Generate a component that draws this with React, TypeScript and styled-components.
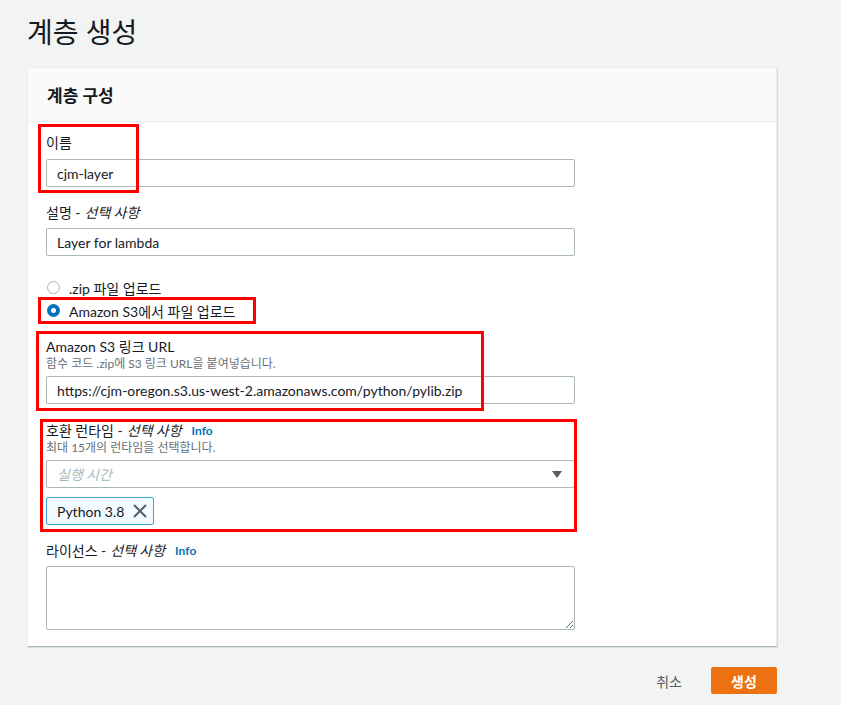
import React from "react";
import styled, { createGlobalStyle } from "styled-components";

const FONT = `Lato, "Noto Sans CJK KR", sans-serif`;

const Global = createGlobalStyle`
  html, body { margin: 0; padding: 0; background: #f2f3f3; }
  body { font-family: ${FONT}; color: #16191f; }
  * { box-sizing: border-box; }
`;

const Page = styled.div`
  position: relative;
  width: 841px;
  min-height: 705px;
  padding: 10px 64px 0 27px;
`;

const Title = styled.h1`
  margin: 0;
  font-size: 28px;
  font-weight: 400;
  line-height: 44px;
  color: #16191f;
`;

const Card = styled.section`
  margin-top: 13px;
  width: 750px;
  background: #fff;
  border: 1px solid #eaeded;
  border-bottom-color: #aab7b8;
  box-shadow: 1px 1px 0 #d5dbdb;
`;

const CardHeader = styled.header`
  height: 54px;
  display: flex;
  align-items: center;
  padding: 0 19px;
  background: #fafafa;
  border-bottom: 1px solid #eaeded;
  font-size: 17px;
  font-weight: 700;
`;

const CardBody = styled.div`
  padding: 12px 201px 16px 18px;
  display: flex;
  flex-direction: column;
`;

const Field = styled.div<{ $mt?: number }>`
  margin-top: ${(p) => p.$mt ?? 0}px;
  display: flex;
  flex-direction: column;
`;

const Label = styled.label`
  font-size: 14px;
  line-height: 18px;
  display: flex;
  align-items: center;
  em { font-style: italic; margin-left: 4px; }
`;

const Info = styled.span`
  margin-left: 10px;
  font-size: 12px;
  font-weight: 700;
  color: #0073bb;
`;

const Desc = styled.div`
  font-size: 12px;
  line-height: 16px;
  color: #687078;
`;

const Input = styled.input<{ $mt?: number }>`
  margin-top: ${(p) => p.$mt ?? 6}px;
  width: 529px;
  height: 28px;
  border: 1px solid #aab7b8;
  border-radius: 2px;
  padding: 0 10px;
  font-family: ${FONT};
  font-size: 14px;
  color: #16191f;
  background: #fff;
  outline: none;
`;

const Select = styled.div`
  margin-top: 4px;
  width: 529px;
  height: 28px;
  border: 1px solid #aab7b8;
  border-radius: 2px;
  padding: 0 12px 0 10px;
  display: flex;
  align-items: center;
  justify-content: space-between;
`;

const Placeholder = styled.span`
  font-size: 14px;
  font-style: italic;
  color: #aab7b8;
`;

const Caret = styled.span`
  width: 0;
  height: 0;
  border-left: 5.5px solid transparent;
  border-right: 5.5px solid transparent;
  border-top: 7px solid #545b64;
`;

const Token = styled.div`
  margin-top: 9px;
  align-self: flex-start;
  height: 28px;
  display: flex;
  align-items: center;
  gap: 8px;
  padding: 0 5px 0 10px;
  background: #f1faff;
  border: 1px solid #3aa4d4;
  border-radius: 2px;
  font-size: 14px;
`;

const TextArea = styled.textarea`
  margin-top: 6px;
  width: 529px;
  height: 64px;
  border: 1px solid #aab7b8;
  border-radius: 2px;
  outline: none;
  font-family: inherit;
`;

const RadioGroup = styled.div`
  margin-top: 20px;
  display: flex;
  flex-direction: column;
`;

const RadioRow = styled.div`
  height: 23px;
  display: flex;
  align-items: center;
  gap: 9px;
  padding-left: 1px;
  font-size: 14px;
`;

const RadioDot = styled.span<{ $on?: boolean }>`
  width: 13px;
  height: 13px;
  border-radius: 50%;
  border: ${(p) => (p.$on ? "4px solid #0073bb" : "1px solid #aab7b8")};
  background: #fff;
`;

const Footer = styled.div`
  width: 750px;
  margin-top: 20px;
  display: flex;
  justify-content: flex-end;
  align-items: center;
  gap: 29px;
`;

const LinkButton = styled.button`
  border: none;
  background: none;
  font-family: inherit;
  font-size: 14px;
  color: #545b64;
  padding: 0;
`;

const PrimaryButton = styled.button`
  width: 66px;
  height: 27px;
  border: none;
  border-radius: 2px;
  background: #ec7211;
  color: #fff;
  font-family: inherit;
  font-size: 14px;
  font-weight: 700;
`;

const Mark = styled.div<{ $x: number; $y: number; $w: number; $h: number }>`
  position: absolute;
  left: ${(p) => p.$x}px;
  top: ${(p) => p.$y}px;
  width: ${(p) => p.$w}px;
  height: ${(p) => p.$h}px;
  border: 3px solid #ff0000;
  pointer-events: none;
`;

const CloseIcon = () => (
  <svg width="16" height="16" viewBox="0 0 16 16">
    <path d="M2 2 L14 14 M14 2 L2 14" stroke="#545b64" strokeWidth="2" fill="none" />
  </svg>
);

export default function App() {
  return (
    <>
      <Global />
      <Page>
        <Title>계층 생성</Title>
        <Card>
          <CardHeader>계층 구성</CardHeader>
          <CardBody>
            <Field>
              <Label>이름</Label>
              <Input $mt={7} defaultValue="cjm-layer" />
            </Field>
            <Field $mt={17}>
              <Label>
                설명 -<em>선택 사항</em>
              </Label>
              <Input defaultValue="Layer for lambda" />
            </Field>
            <RadioGroup>
              <RadioRow>
                <RadioDot />
                .zip 파일 업로드
              </RadioRow>
              <RadioRow>
                <RadioDot $on />
                Amazon S3에서 파일 업로드
              </RadioRow>
            </RadioGroup>
            <Field $mt={16}>
              <Label>Amazon S3 링크 URL</Label>
              <Desc>함수 코드 .zip에 S3 링크 URL을 붙여넣습니다.</Desc>
              <Input $mt={4} defaultValue="https://cjm-oregon.s3.us-west-2.amazonaws.com/python/pylib.zip" />
            </Field>
            <Field $mt={18}>
              <Label>
                호환 런타임 -<em>선택 사항</em>
                <Info>Info</Info>
              </Label>
              <Desc>최대 15개의 런타임을 선택합니다.</Desc>
              <Select>
                <Placeholder>실행 시간</Placeholder>
                <Caret />
              </Select>
              <Token>
                Python 3.8
                <CloseIcon />
              </Token>
            </Field>
            <Field $mt={17}>
              <Label>
                라이선스 -<em>선택 사항</em>
                <Info>Info</Info>
              </Label>
              <TextArea />
            </Field>
          </CardBody>
        </Card>
        <Footer>
          <LinkButton>취소</LinkButton>
          <PrimaryButton>생성</PrimaryButton>
        </Footer>
        <Mark $x={38} $y={124} $w={101} $h={69} />
        <Mark $x={38} $y={297} $w={218} $h={27} />
        <Mark $x={36} $y={331} $w={448} $h={80} />
        <Mark $x={40} $y={419} $w={537} $h={113} />
      </Page>
    </>
  );
}
